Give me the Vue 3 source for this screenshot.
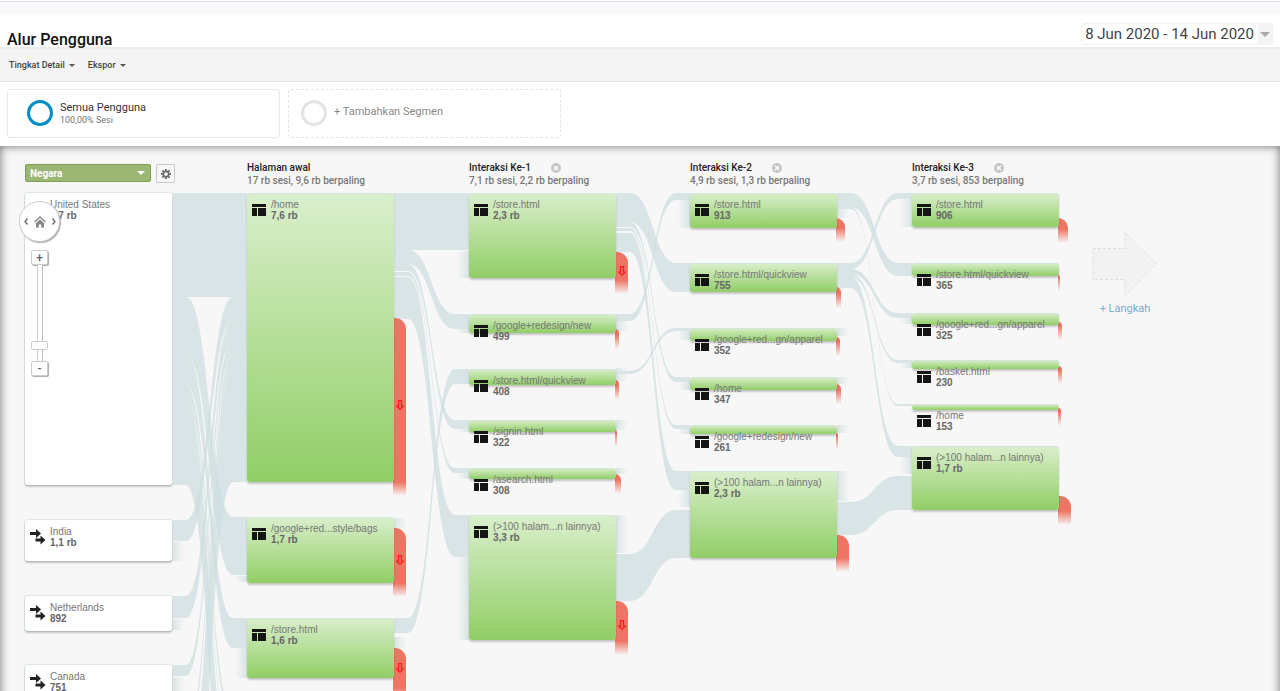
<script setup>
import { ref } from 'vue'

const dimension = ref('Negara')
const zoomLevel = ref(13)

const ORIGIN = 146
const NODE_W = 147
const colX = [25, 247, 469, 690, 912]

const headings = [
  { col: 1, title: 'Halaman awal', info: '17 rb sesi, 9,6 rb berpaling', closable: false },
  { col: 2, title: 'Interaksi Ke-1', info: '7,1 rb sesi, 2,2 rb berpaling', closable: true },
  { col: 3, title: 'Interaksi Ke-2', info: '4,9 rb sesi, 1,3 rb berpaling', closable: true },
  { col: 4, title: 'Interaksi Ke-3', info: '3,7 rb sesi, 853 berpaling', closable: true },
]

// [column, top, bottom, label, sessions]
const nodes = [
  [0, 193, 485, 'United States', '9,7 rb'],
  [0, 520, 561, 'India', '1,1 rb'],
  [0, 596, 631, 'Netherlands', '892'],
  [0, 665, 697, 'Canada', '751'],
  [1, 193, 482, '/home', '7,6 rb'],
  [1, 517, 583, '/google+red...style/bags', '1,7 rb'],
  [1, 618, 678, '/store.html', '1,6 rb'],
  [2, 193, 278, '/store.html', '2,3 rb'],
  [2, 314, 333, '/google+redesign/new', '499'],
  [2, 369, 385, '/store.html/quickview', '408'],
  [2, 420, 432, '/signin.html', '322'],
  [2, 468, 479, '/asearch.html', '308'],
  [2, 515, 640, '(>100 halam...n lainnya)', '3,3 rb'],
  [3, 193, 228, '/store.html', '913'],
  [3, 263, 292, '/store.html/quickview', '755'],
  [3, 328, 341, '/google+red...gn/apparel', '352'],
  [3, 377, 390, '/home', '347'],
  [3, 425, 434, '/google+redesign/new', '261'],
  [3, 471, 558, '(>100 halam...n lainnya)', '2,3 rb'],
  [4, 193, 227, '/store.html', '906'],
  [4, 263, 276, '/store.html/quickview', '365'],
  [4, 313, 325, '/google+red...gn/apparel', '325'],
  [4, 360, 369, '/basket.html', '230'],
  [4, 404, 410, '/home', '153'],
  [4, 446, 510, '(>100 halam...n lainnya)', '1,7 rb'],
].map(([col, top, bottom, label, count]) => ({ col, label, count, x: colX[col], y: top - ORIGIN, h: bottom - top }))

// [source column, source top, source bottom, target top, target bottom]
const links = [
  [0, 193, 297, 193, 297],
  [0, 297, 355, 517, 575],
  [0, 355, 385, 618, 648],
  [0, 385, 397, 712, 724],
  [0, 397, 403, 745, 751],
  [0, 403, 485, 775, 857],
  [0, 520, 541, 297, 320],
  [0, 596, 618, 320, 341],
  [0, 665, 676, 341, 355],
  [0, 730, 741, 355, 366],
  [0, 770, 886, 366, 482],
  [1, 193, 250, 193, 250],
  [1, 250, 264, 314, 329],
  [1, 264, 271, 420, 429],
  [1, 272, 276, 468, 473],
  [1, 277, 319, 515, 557],
  [1, 618, 633, 369, 384],
  [2, 193, 222, 263, 292],
  [2, 222, 227, 377, 382],
  [2, 228, 231, 425, 429],
  [2, 233, 252, 471, 490],
  [2, 314, 321, 193, 200],
  [2, 371, 374, 328, 331],
  [2, 554, 601, 510, 558],
  [3, 193, 207, 263, 276],
  [3, 207, 209, 404, 406],
  [3, 263, 269, 193, 199],
  [3, 269, 274, 313, 318],
  [3, 274, 277, 360, 363],
  [3, 277, 288, 446, 457],
  [3, 502, 535, 476, 510],
]
function ribbon([c, a0, a1, b0, b1]) {
  const x0 = colX[c] + NODE_W
  const x1 = colX[c + 1]
  const p = x0 + 14
  const q = x1 - 14
  const m = (p + q) / 2
  return `M${x0} ${a0}H${p}C${m} ${a0} ${m} ${b0} ${q} ${b0}H${x1}V${b1}H${q}C${m} ${b1} ${m} ${a1} ${p} ${a1}H${x0}Z`
}

// [column, top, bottom]
const fadesOut = [
  [0, 542, 561], [0, 619, 630], [0, 677, 697], [1, 518, 528], [1, 637, 648],
  [2, 321, 331], [2, 368, 381], [2, 420, 430], [2, 468, 474], [2, 515, 553],
  [3, 208, 218], [3, 328, 336], [3, 377, 384], [3, 425, 433], [3, 471, 501],
]
const fadesIn = [
  [1, 576, 582], [1, 648, 678], [2, 251, 278], [2, 329, 333], [2, 429, 432], [2, 473, 479], [2, 557, 640],
  [3, 200, 228], [3, 331, 340], [3, 382, 390], [3, 429, 434], [3, 490, 507],
  [4, 199, 227], [4, 318, 324], [4, 363, 368], [4, 457, 474],
]

// [column, top, bottom, width, arrow centre]
const exits = [
  [1, 318, 496, 13, 405], [1, 528, 597, 13, 560], [1, 648, 702, 13, 668],
  [2, 252, 294, 13, 271], [2, 329, 349, 4], [2, 380, 400, 4], [2, 430, 447, 2], [2, 474, 494, 6], [2, 601, 655, 13, 625],
  [3, 218, 242, 9], [3, 287, 308, 5], [3, 337, 356, 4], [3, 384, 404, 5], [3, 433, 450, 2], [3, 535, 572, 13],
  [4, 218, 243, 10], [4, 275, 291, 2], [4, 322, 340, 4], [4, 366, 384, 4], [4, 408, 426, 3], [4, 496, 525, 13],
].map(([col, top, bottom, w, arrow]) => ({
  x: colX[col] + NODE_W - 1, y: top - ORIGIN, h: bottom - top, w, arrow: arrow ? arrow - top - 5 : null,
}))
</script>

<template>
  <div class="page">
    <div class="strip"></div>
    <header class="head">
      <h1>Alur Pengguna</h1>
      <button class="date" type="button">
        <span class="range">8 Jun 2020 - 14 Jun 2020</span>
        <span class="date-arrow"><i class="caret big"></i></span>
      </button>
    </header>
    <nav class="toolbar">
      <button type="button">Tingkat Detail<i class="caret"></i></button>
      <button type="button">Ekspor<i class="caret"></i></button>
    </nav>
    <section class="segments">
      <button class="segment" type="button">
        <span class="ring"></span>
        <span class="seg-text">
          <span class="seg-name">Semua Pengguna</span>
          <span class="seg-info">100,00% Sesi</span>
        </span>
      </button>
      <button class="segment add" type="button">
        <span class="ring"></span>
        <span class="seg-add">+ Tambahkan Segmen</span>
      </button>
    </section>

    <main class="canvas">
      <svg class="flows" width="1280" height="800" viewBox="0 146 1280 800" aria-hidden="true">
        <defs>
          <linearGradient id="fadeOut"><stop offset="0" stop-color="#d8e4e4" /><stop offset="1" stop-color="#d8e4e4" stop-opacity="0" /></linearGradient>
          <linearGradient id="fadeIn"><stop offset="0" stop-color="#d8e4e4" stop-opacity="0" /><stop offset="1" stop-color="#d8e4e4" /></linearGradient>
        </defs>
        <path v-for="(l, i) in links" :key="'l' + i" class="ribbon" :d="ribbon(l)" />
        <rect v-for="(f, i) in fadesOut" :key="'o' + i" :x="colX[f[0]] + NODE_W" :y="f[1]" width="12" :height="f[2] - f[1]" fill="url(#fadeOut)" />
        <rect v-for="(f, i) in fadesIn" :key="'i' + i" :x="colX[f[0]] - 12" :y="f[1]" width="12" :height="f[2] - f[1]" fill="url(#fadeIn)" />
      </svg>

      <div class="dimension">
        <label class="picker">
          <select v-model="dimension" aria-label="Dimensi">
            <option>Negara</option>
          </select>
          <i class="caret white"></i>
        </label>
        <button class="gear" type="button" aria-label="Setelan">
          <svg width="10" height="10" viewBox="-12 -12 24 24">
            <circle r="6.500" fill="none" stroke="#666" stroke-width="4" />
            <path d="M0-8v-4M0 8v4M8 0h4M-8 0h-4M5.700-5.700l2.800-2.800M-5.700 5.700l-2.800 2.800M5.700 5.700l2.800 2.800M-5.700-5.700l-2.800-2.800" stroke="#666" stroke-width="4.500" />
          </svg>
        </button>
      </div>

      <div v-for="h in headings" :key="h.title" class="heading" :style="{ left: colX[h.col] + 'px' }">
        <div class="heading-row">
          <h2>{{ h.title }}</h2>
          <button v-if="h.closable" class="close" type="button" :aria-label="'Hapus ' + h.title">
            <svg width="10" height="10" viewBox="0 0 10 10"><circle cx="5" cy="5" r="5" fill="#c6c6c6" /><path d="M3 3l4 4M7 3l-4 4" stroke="#fff" stroke-width="1.3" /></svg>
          </button>
        </div>
        <p>{{ h.info }}</p>
      </div>

      <div v-for="(e, i) in exits" :key="'e' + i" class="exit" :style="{ left: e.x + 'px', top: e.y + 'px', width: e.w + 'px', height: e.h + 'px' }">
        <svg v-if="e.arrow !== null" class="exit-arrow" :style="{ top: e.arrow + 'px' }" width="8" height="10" viewBox="0 0 8 10"><path d="M2.500.6h3v5.500h1.800L4 9.200.7 6.100h1.800z" fill="none" stroke="#ff1c1c" stroke-width="1.300" /></svg>
      </div>

      <div v-for="(n, i) in nodes" :key="'n' + i" class="node" :class="{ country: n.col === 0 }" :style="{ left: n.x + 'px', top: n.y + 'px', width: NODE_W + 'px', height: n.h + 'px' }">
        <svg v-if="n.col > 0" class="icon" width="14" height="12" viewBox="0 0 14 12"><path fill="#151515" d="M0 0h14v3H0zM0 4h5v8H0zM6 4h8v8H6z" /></svg>
        <svg v-else class="icon arrows" width="16" height="16" viewBox="0 0 16 16"><path fill="#222" d="M0 3h6V0l5 4.500L6 9V6H0zM5.500 9.500h5v-3l5 4.500-5 4.500v-3h-5z" /></svg>
        <div class="node-text">
          <div class="label">{{ n.label }}</div>
          <div class="count">{{ n.count }}</div>
        </div>
      </div>

      <button class="step" type="button">
        <svg width="66" height="66" viewBox="0 0 66 66"><path d="M1 17.500h32V1.500l31.500 31.500L33 64.500v-16H1z" fill="#f2f2f2" stroke="#dcdcdc" stroke-dasharray="3 2" /></svg>
        <span>+ Langkah</span>
      </button>

      <div class="navigator">
        <div class="dial">
          <button type="button" aria-label="Kiri"><svg width="4" height="7" viewBox="0 0 4 7"><path class="chevron" d="M3.500.5L1 3.500l2.500 3" /></svg></button>
          <button type="button" aria-label="Awal"><svg width="12" height="12" viewBox="0 0 12 12"><path d="M.5 6L6 1l5.500 5" fill="none" stroke="#888" stroke-width="1.500" /><path d="M2 7l4-3.600L10 7v4.500H7.200V8.500H4.800v3H2z" fill="#888" /></svg></button>
          <button type="button" aria-label="Kanan"><svg width="4" height="7" viewBox="0 0 4 7"><path class="chevron" d="M.5.5L3 3.500l-2.500 3" /></svg></button>
        </div>
        <button class="zoom" type="button">+</button>
        <input v-model="zoomLevel" class="slider" type="range" min="0" max="100" aria-label="Zoom" />
        <button class="zoom" type="button">-</button>
      </div>
    </main>
  </div>
</template>

<style>
body { margin: 0; }
</style>

<style scoped>
* { box-sizing: border-box; }
.page {
  height: 100vh;
  display: flex;
  flex-direction: column;
  overflow: hidden;
  background: #fff;
  color: #222;
  font-family: Roboto, "Liberation Sans", sans-serif;
}
button {
  margin: 0;
  padding: 0;
  border: 0;
  background: none;
  color: inherit;
  font: inherit;
  cursor: pointer;
}
h1, h2, p { margin: 0; }
.strip { flex: none; height: 13px; margin-top: 1px; border-top: 1px solid #dadce0; background: #f8f9fb; }
.head {
  flex: none;
  height: 33px;
  padding: 0 7px;
  display: flex;
  justify-content: space-between;
}
h1 { padding-top: 16px; font-size: 16px; line-height: 20px; font-weight: 500; color: #111; z-index: 1; white-space: nowrap; }
.date {
  display: flex;
  align-items: stretch;
  height: 22px;
  margin-top: 9px;
  border: 1px solid #f2f2f2;
  border-radius: 3px;
  font-size: 15px;
  color: #444;
}
.range { padding: 0 4px 0 3px; line-height: 20px; }
.date-arrow { display: flex; align-items: center; padding: 0 2px; background: #f4f4f4; }
.caret {
  display: inline-block;
  border: 3px solid transparent;
  border-top-color: #555;
  border-bottom: 0;
}
.caret.big { border-width: 5px 5px 0; border-top-color: #aaa; }
.caret.white { border-width: 4px 4px 0; border-top-color: #fff; }
.toolbar {
  flex: none;
  height: 35px;
  padding: 0 9px;
  display: flex;
  align-items: center;
  gap: 13px;
  background: #f4f4f4;
  border-top: 2px solid #ededed;
  border-bottom: 1px solid #e8e8e8;
  font-size: 9px;
  font-weight: 500;
  color: #444;
}
.toolbar button { display: flex; align-items: center; gap: 4px; }
.segments { flex: none; height: 64px; padding: 7px; display: flex; gap: 8px; }
.segment {
  flex: 0 1 273px;
  height: 49px;
  padding: 0 0 1px 19px;
  display: flex;
  align-items: center;
  gap: 7px;
  border: 1px solid #e8e8e8;
  border-radius: 3px;
  text-align: left;
}
.segment.add { border: 1px dashed #e4e4e4; padding-left: 12px; }
.ring { flex: none; width: 26px; height: 26px; border: 3px solid #058dc7; border-radius: 50%; }
.add .ring { border-color: #e4e4e4; }
.seg-name, .seg-info { display: block; }
.seg-name { font-size: 11px; line-height: 14px; color: #333; }
.seg-info { font-size: 9px; line-height: 11px; color: #777; }
.seg-add { padding-bottom: 4px; font-size: 11px; color: #888; }
.canvas {
  flex: 1;
  min-height: 0;
  position: relative;
  overflow: hidden;
  background: #f7f7f7;
}
.canvas::after {
  content: "";
  position: absolute;
  inset: 0 0 -20px;
  box-shadow: inset 0 0 10px rgba(0, 0, 0, .55);
  pointer-events: none;
}
.flows { position: absolute; left: 0; top: 0; }
.ribbon { fill: #cddedf; fill-opacity: .75; }
.dimension { position: absolute; left: 25px; top: 18px; display: flex; gap: 5px; }
.picker { position: relative; width: 126px; height: 18px; }
.picker select {
  appearance: none;
  display: block;
  width: 100%;
  height: 18px;
  padding: 0 4px;
  border: 1px solid #7f9f4e;
  border-radius: 2px;
  background: #9cb674;
  color: #fff;
  font: 700 10px Roboto, sans-serif;
}
.picker .caret { position: absolute; right: 6px; top: 7px; }
.gear {
  width: 19px;
  height: 19px;
  display: grid;
  place-items: center;
  border: 1px solid #c8c8c8;
  border-radius: 2px;
  background: #f6f6f6;
}
.heading { position: absolute; top: 15px; font-size: 10px; line-height: 13px; white-space: nowrap; }
.heading-row { width: 92px; display: flex; align-items: center; justify-content: space-between; }
h2 { font-size: 10px; line-height: 13px; font-weight: 500; color: #222; }
.heading p { font-weight: 500; color: #777; }
.close { display: flex; }
.node {
  position: absolute;
  border-radius: 3px;
  background: linear-gradient(#daefcc, #91ce66);
  box-shadow: 0 2px 2px rgba(0, 0, 0, .2), inset 0 1px 0 #d3e5d8;
}
.node.country { background: #fff; box-shadow: 0 2px 2px rgba(0, 0, 0, .2), 0 0 0 1px #dde7e7; }
.icon { position: absolute; left: 5px; top: 11px; }
.icon.arrows { top: 9px; }
.node-text {
  padding: 6px 0 0 24px;
  font: 10px/11px "Liberation Sans", Arial, sans-serif;
  white-space: nowrap;
  color: #777;
}
.country .node-text { padding-left: 25px; }
.count { font-weight: 700; color: #666; }
.exit {
  position: absolute;
  border-top-right-radius: 11px;
  background: linear-gradient(to bottom, #ee7563 calc(100% - 14px), transparent);
}
.exit-arrow { position: absolute; left: 3px; }
.step {
  position: absolute;
  left: 1092px;
  top: 85px;
  display: flex;
  flex-direction: column;
  align-items: center;
  gap: 5px;
  font-size: 11px;
  line-height: 14px;
  color: #7aa9cc;
}
.navigator {
  position: absolute;
  left: 19px;
  top: 55px;
  width: 41px;
  display: flex;
  flex-direction: column;
  align-items: center;
}
.dial {
  width: 41px;
  height: 41px;
  margin-bottom: 8px;
  display: flex;
  align-items: center;
  justify-content: center;
  gap: 6px;
  border: 1px solid #ccc;
  border-radius: 50%;
  background: #fff;
  box-shadow: 1px 1px 1px #aaa;
}
.dial button { display: flex; }
.chevron { fill: none; stroke: #666; stroke-width: 1.3; }
.zoom {
  width: 17px;
  height: 15px;
  border: 1px solid #ccc;
  border-radius: 2px;
  background: #fff;
  box-shadow: 1px 1px 1px #aaa;
  font-size: 12px;
  line-height: 12px;
  font-weight: 500;
  color: #666;
}
.slider {
  appearance: none;
  writing-mode: vertical-lr;
  direction: rtl;
  width: 17px;
  height: 96px;
  margin: 0;
  background: linear-gradient(90deg, transparent 6px, #ccc 6px 7px, #fff 7px 11px, #bbb 11px 12px, transparent 12px);
}
.slider::-webkit-slider-thumb {
  appearance: none;
  width: 17px;
  height: 9px;
  border: 1px solid #ccc;
  border-radius: 2px;
  background: #fff;
}
</style>
